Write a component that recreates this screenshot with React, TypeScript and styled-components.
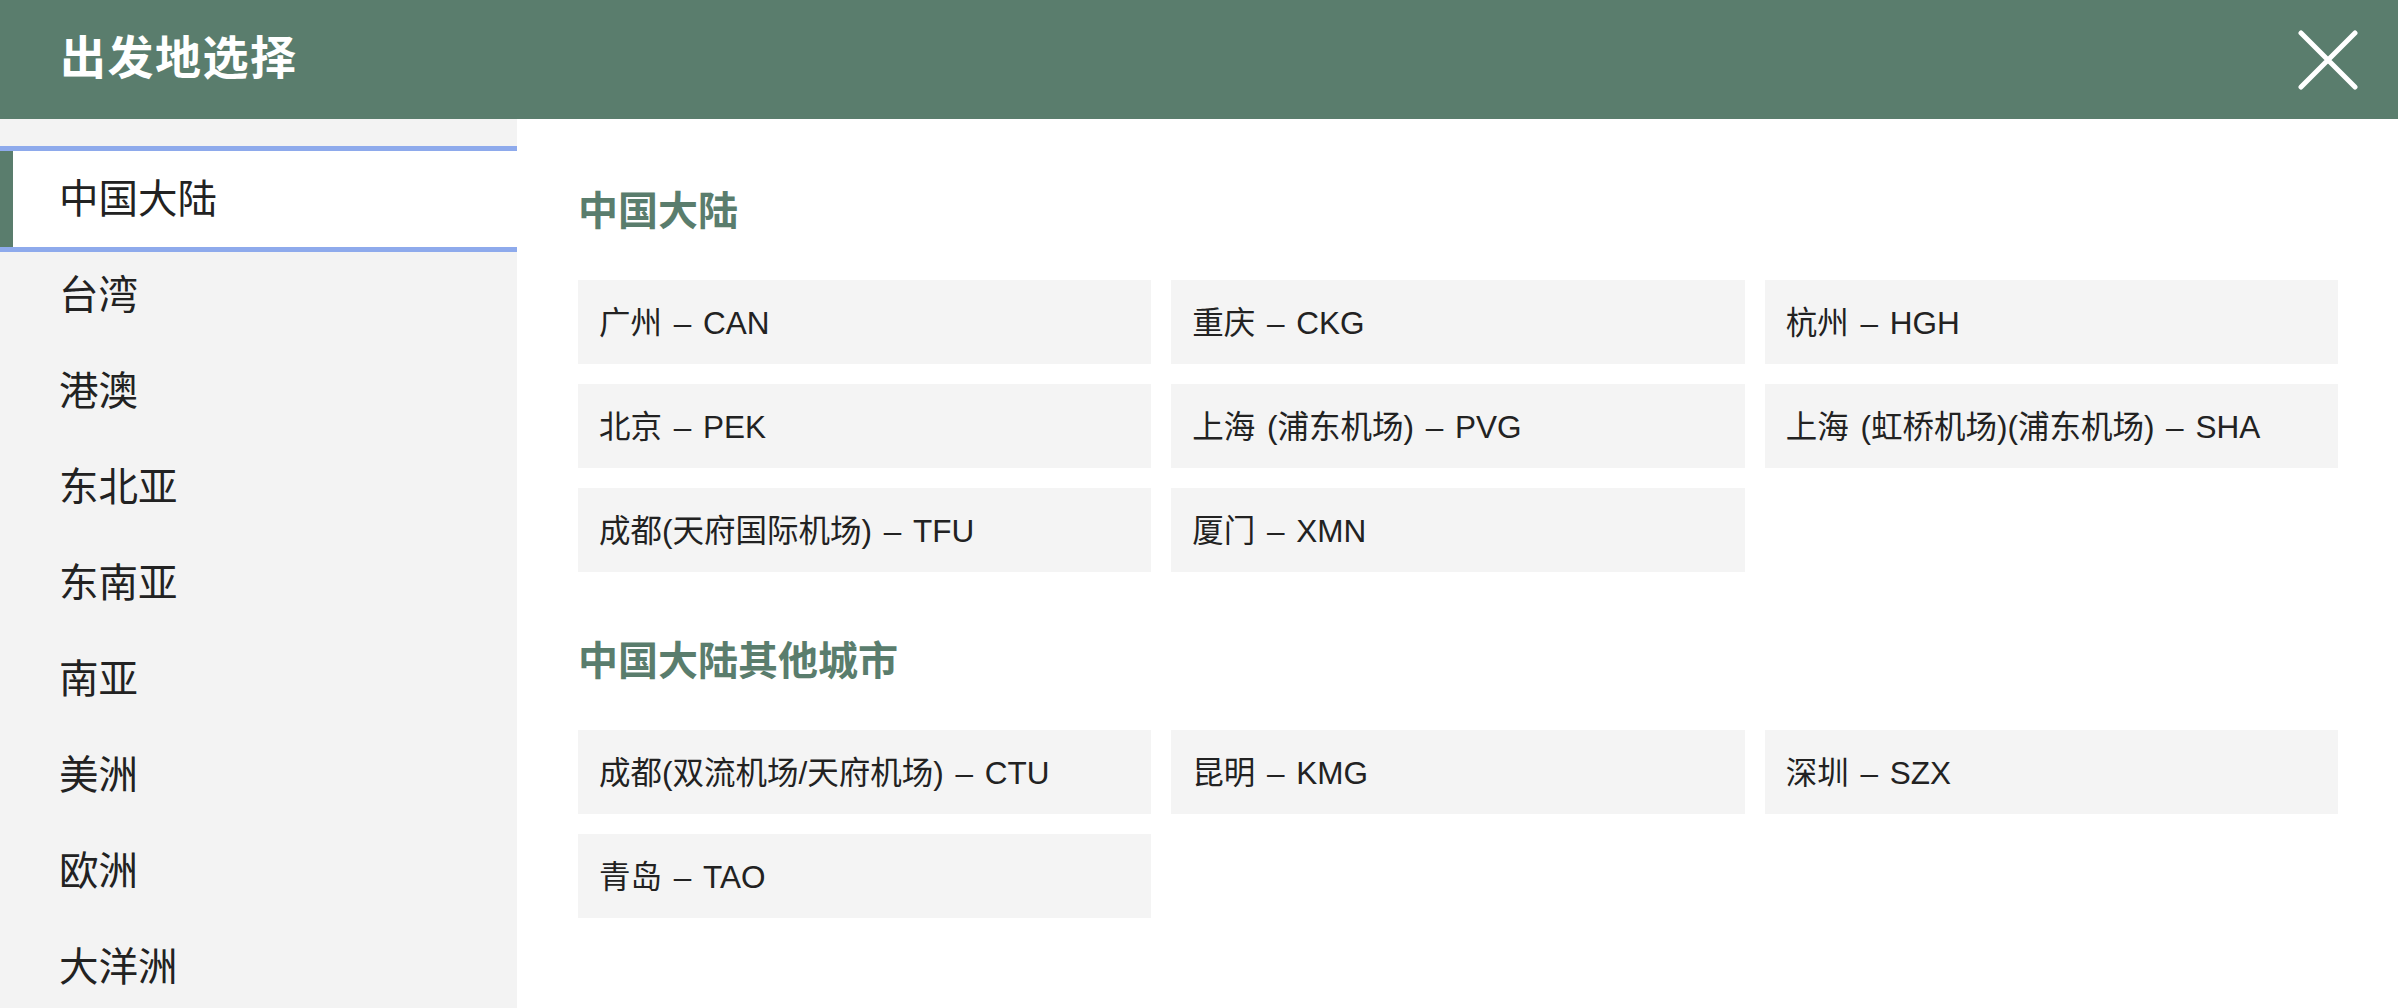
import React from "react";
import styled, { createGlobalStyle } from "styled-components";

const GlobalStyle = createGlobalStyle`
  html, body {
    margin: 0;
    padding: 0;
    background: #ffffff;
  }
  body {
    font-family: "Liberation Sans", "Noto Sans CJK SC", sans-serif;
    color: #222222;
  }
  * { box-sizing: border-box; }
`;

const GREEN = "#5a7d6d";

const Modal = styled.div`
  width: 100%;
  height: 100vh;
  display: flex;
  flex-direction: column;
  overflow: hidden;
`;

const Header = styled.header`
  height: 119px;
  flex: 0 0 119px;
  background: ${GREEN};
  display: flex;
  align-items: center;
  justify-content: space-between;
  padding: 0 40px 0 60px;
`;

const Title = styled.h1`
  margin: 0 0 12px 0;
  color: #ffffff;
  font-family: "Noto Sans CJK SC", sans-serif;
  font-weight: 700;
  font-size: 46px;
  letter-spacing: 1.5px;
`;

const CloseButton = styled.button`
  width: 60px;
  height: 60px;
  padding: 0;
  border: none;
  background: transparent;
  display: flex;
  align-items: center;
  justify-content: center;
  cursor: pointer;
`;

const Body = styled.div`
  flex: 1;
  display: flex;
  min-height: 0;
`;

const Sidebar = styled.nav`
  width: 517px;
  flex: 0 0 517px;
  background: #f3f3f3;
  padding-top: 32px;
  overflow: hidden;
`;

const RegionItem = styled.div<{ $active?: boolean }>`
  height: 96px;
  display: flex;
  align-items: center;
  padding-left: ${(p) => (p.$active ? "46px" : "59px")};
  padding-bottom: 8px;
  border-left: ${(p) => (p.$active ? `13px solid ${GREEN}` : "none")};
  background: ${(p) => (p.$active ? "#ffffff" : "transparent")};
  box-shadow: ${(p) =>
    p.$active ? "0 -5px 0 #8eaaec, 0 5px 0 #8eaaec" : "none"};
  position: relative;
  z-index: ${(p) => (p.$active ? 1 : 0)};
  font-family: "Noto Sans CJK SC", sans-serif;
  font-size: 39.5px;
  color: #222222;
`;

const Content = styled.main`
  flex: 1;
  padding: 57px 60px 0 61px;
  overflow: hidden;
`;

const Section = styled.section`
  & + & {
    margin-top: 54px;
  }
`;

const SectionTitle = styled.h2`
  margin: 0 0 40px 0;
  height: 64px;
  line-height: 64px;
  color: ${GREEN};
  font-family: "Noto Sans CJK SC", sans-serif;
  font-weight: 700;
  font-size: 40px;
`;

const CityGrid = styled.div`
  display: grid;
  grid-template-columns: repeat(3, 1fr);
  column-gap: 20px;
  row-gap: 20px;
`;

const CityCard = styled.div`
  height: 84px;
  background: #f4f4f4;
  display: flex;
  align-items: center;
  padding: 0 21px 5px 21px;
  font-size: 31.5px;
  word-spacing: 3px;
  color: #222222;
  white-space: nowrap;
`;

const regions = ["中国大陆", "台湾", "港澳", "东北亚", "东南亚", "南亚", "美洲", "欧洲", "大洋洲"];

const sections = [
  {
    title: "中国大陆",
    cities: [
      "广州 – CAN",
      "重庆 – CKG",
      "杭州 – HGH",
      "北京 – PEK",
      "上海 (浦东机场) – PVG",
      "上海 (虹桥机场)(浦东机场) – SHA",
      "成都(天府国际机场) – TFU",
      "厦门 – XMN",
    ],
  },
  {
    title: "中国大陆其他城市",
    cities: ["成都(双流机场/天府机场) – CTU", "昆明 – KMG", "深圳 – SZX", "青岛 – TAO"],
  },
];

const CloseIcon = () => (
  <svg width="60" height="60" viewBox="0 0 60 60" fill="none">
    <path d="M3 3 L57 57 M57 3 L3 57" stroke="#ffffff" strokeWidth="5" strokeLinecap="round" />
  </svg>
);

export default function App() {
  return (
    <>
      <GlobalStyle />
      <Modal>
        <Header>
          <Title>出发地选择</Title>
          <CloseButton aria-label="关闭">
            <CloseIcon />
          </CloseButton>
        </Header>
        <Body>
          <Sidebar>
            {regions.map((r, i) => (
              <RegionItem key={r} $active={i === 0}>
                {r}
              </RegionItem>
            ))}
          </Sidebar>
          <Content>
            {sections.map((s) => (
              <Section key={s.title}>
                <SectionTitle>{s.title}</SectionTitle>
                <CityGrid>
                  {s.cities.map((c) => (
                    <CityCard key={c}>{c}</CityCard>
                  ))}
                </CityGrid>
              </Section>
            ))}
          </Content>
        </Body>
      </Modal>
    </>
  );
}
